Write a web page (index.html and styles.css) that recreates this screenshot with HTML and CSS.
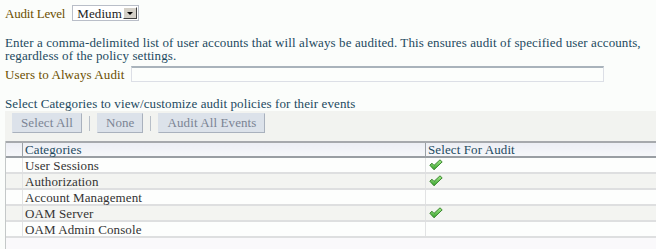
FILE: index.html
```html
<!DOCTYPE html>
<html>
  <head>
    <title>Audit Configuration</title>
    <link rel="stylesheet" href="styles.css">
  </head>
  <body>
    <div id="audit-page">
      <!-- Audit level -->
      <div class="field level-field">
        <span class="label">Audit Level</span>
        <div class="choice">
          <span class="choice-value">Medium</span>
          <span class="choice-btn"><span class="arrow"></span></span>
        </div>
      </div>

      <p class="info">
        Enter a comma-delimited list of user accounts that will always be audited. This ensures audit of specified user accounts, regardless of the policy settings.
      </p>

      <div class="field users-field">
        <span class="label">Users to Always Audit</span>
        <input type="text" class="text-input">
      </div>

      <p class="section-title">Select Categories to view/customize audit policies for their events</p>

      <!-- Toolbar -->
      <div class="toolbar">
        <button class="tool-btn">Select All</button>
        <span class="sep"></span>
        <button class="tool-btn">None</button>
        <span class="sep"></span>
        <button class="tool-btn">Audit All Events</button>
      </div>

      <!-- Categories table -->
      <div class="table-wrap">
        <table class="cat-table">
          <thead>
            <tr>
              <th class="pick"></th>
              <th class="name">Categories</th>
              <th class="audit">Select For Audit</th>
            </tr>
          </thead>
          <tbody>
            <tr><td class="pick"></td><td>User Sessions</td><td class="check-cell"><svg class="check" width="14" height="12" viewBox="0 0 14 12"><defs><linearGradient id="g" x1="0" y1="0" x2="0" y2="1"><stop offset="0" stop-color="#a6ec8c"/><stop offset="1" stop-color="#35a12a"/></linearGradient></defs><path d="M0.8 6.2 L3 4.2 L5 6.4 L11 0.8 L13.2 2.9 L5 10.8 Z" fill="url(#g)" stroke="#2e7d22" stroke-width="0.9" stroke-linejoin="round"/></svg></td></tr>
            <tr class="alt"><td class="pick"></td><td>Authorization</td><td class="check-cell"><svg class="check" width="14" height="12" viewBox="0 0 14 12"><path d="M0.8 6.2 L3 4.2 L5 6.4 L11 0.8 L13.2 2.9 L5 10.8 Z" fill="url(#g)" stroke="#2e7d22" stroke-width="0.9" stroke-linejoin="round"/></svg></td></tr>
            <tr><td class="pick"></td><td>Account Management</td><td class="check-cell"></td></tr>
            <tr class="alt"><td class="pick"></td><td>OAM Server</td><td class="check-cell"><svg class="check" width="14" height="12" viewBox="0 0 14 12"><path d="M0.8 6.2 L3 4.2 L5 6.4 L11 0.8 L13.2 2.9 L5 10.8 Z" fill="url(#g)" stroke="#2e7d22" stroke-width="0.9" stroke-linejoin="round"/></svg></td></tr>
            <tr><td class="pick"></td><td>OAM Admin Console</td><td class="check-cell"></td></tr>
          </tbody>
        </table>
      </div>
    </div>
  </body>
</html>
```

FILE: styles.css
```css
body {
  margin: 0;
  padding: 0;
  background-color: #fbfdfb;
  font-family: "Liberation Serif", serif;
  font-size: 13px;
  letter-spacing: 0.1px;
  line-height: 13px;
  color: #333;
}

#audit-page {
  padding: 5px 0 0 5px;
  height: 244px;
  display: flex;
  flex-direction: column;
}

.field {
  display: flex;
  align-items: center;
  height: 16px;
  gap: 7px;
}

.label {
  color: #6b4f00;
}

.level-field .label {
  letter-spacing: -0.2px;
}

/* Fake select box */
.choice {
  display: flex;
  align-items: center;
  width: 67px;
  height: 16px;
  box-sizing: border-box;
  border: 1px solid #b9bec8;
  background-color: #fff;
  padding-left: 4px;
}

.choice-value {
  flex: 1;
  color: #222;
}

.choice-btn {
  width: 14px;
  height: 12px;
  margin-right: 1px;
  background-color: #d4d0c8;
  border: 1px solid #fff;
  border-right-color: #404040;
  border-bottom-color: #404040;
  box-sizing: border-box;
  display: flex;
  align-items: center;
  justify-content: center;
}

.arrow {
  width: 0;
  height: 0;
  border-left: 3px solid transparent;
  border-right: 3px solid transparent;
  border-top: 3px solid #000;
  margin-top: 1px;
}

.info {
  margin: 15px 0 0;
  color: #1d4a5f;
  height: 26px;
}

.users-field {
  margin-top: 4px;
}

.text-input {
  width: 473px;
  height: 16px;
  box-sizing: border-box;
  border: 1px solid #dcdfe6;
  border-top: 2px solid #a9b3bb;
  background-color: #fcfefc;
  padding: 0;
}

.section-title {
  margin: 15px 0 0;
  height: 14px;
  color: #1d4a5f;
}

/* Toolbar */
.toolbar {
  display: flex;
  align-items: center;
  background-color: #f2f3f0;
  height: 30px;
  padding: 1px 0 7px 7px;
  box-sizing: border-box;
}

.tool-btn {
  font-family: "Liberation Serif", serif;
  font-size: 13px;
  letter-spacing: 0.1px;
  color: #7b8494;
  background-color: #dce2ea;
  border: 1px solid #dce2ea;
  border-right-color: #a9b1bd;
  border-bottom-color: #a9b1bd;
  height: 20px;
  padding: 0 8px;
  margin: 0;
}

.sep {
  width: 1px;
  height: 15px;
  background-color: #b8bfc8;
  margin: 0 7px;
}

/* Table */
.table-wrap {
  flex: 1;
  border-left: 1px solid #c4c8c8;
  background-color: #faf9fb;
}

.cat-table {
  width: 100%;
  border-collapse: collapse;
}

.cat-table th {
  text-align: left;
  font-weight: normal;
  color: #1d4a5f;
  height: 12px;
  padding: 0 2px;
  background: linear-gradient(#eceef4, #f6f7fa);
  border-top: 2px solid #a6a9ad;
  border-bottom: 2px solid #999ea3;
  border-left: 1px solid #9aa0a6;
}

.cat-table th.pick {
  border-left: none;
  width: 12px;
}

.cat-table th.audit {
  width: 226px;
}

.cat-table td {
  height: 14px;
  padding: 0 2px;
  border-bottom: 2px solid #dedfe0;
  border-left: 1px solid #e2e3e4;
  background-color: #fdfefd;
}

.cat-table td.pick {
  border-left: none;
}

.cat-table tr.alt td {
  background-color: #f3f4f1;
}

.check {
  display: block;
  margin-left: 1px;
}
```
